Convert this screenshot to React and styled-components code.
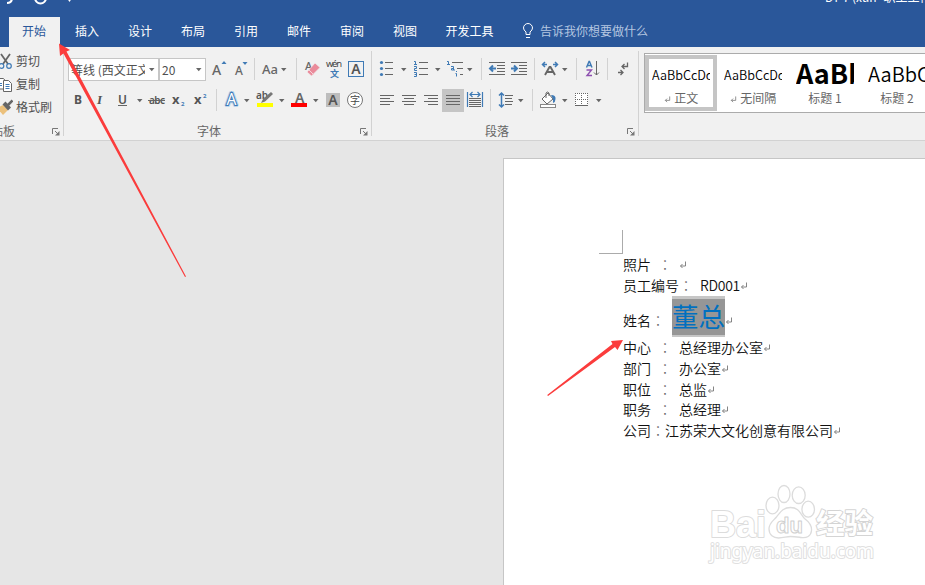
import React from 'react'
import styled, { createGlobalStyle, css } from 'styled-components'

const ui = '"Noto Sans CJK SC", "Noto Sans", sans-serif'
const grey = '#666'
const blue = '#3f7ab5'

const GlobalStyle = createGlobalStyle`
  * { box-sizing: border-box; }
  body { margin: 0; overflow: hidden; }
`

const Window = styled.div`
  position: relative;
  display: flex;
  flex-direction: column;
  width: 925px;
  height: 585px;
  overflow: hidden;
  background: #e6e6e6;
  color: #505050;
  font: 12px/16px ${ui};
`

const TitleBar = styled.div`
  display: flex;
  justify-content: space-between;
  height: 17px;
  flex: none;
  overflow: hidden;
  background: #2a579a;
  color: #fff;
`

const TitleText = styled.div`
  width: 100px;
  margin-top: -11px;
  white-space: nowrap;
`

const Tabs = styled.div`
  display: flex;
  flex: none;
  height: 30px;
  padding-left: 8px;
  background: #2a579a;
`

const Tab = styled.div`
  width: ${p => p.$wide ? 76 : 53}px;
  padding-right: 1px;
  color: #fff;
  line-height: 27px;
  text-align: center;
  ${p => p.$active && css`
    width: 51px;
    margin: 0 1px;
    background: #f1f1f1;
    color: #2a579a;
  `}
`

const TellMe = styled.div`
  display: flex;
  gap: 6px;
  padding-left: 14px;
  color: #b4c6e0;
  line-height: 28px;
`

const Ribbon = styled.div`
  display: flex;
  flex: none;
  height: 94px;
  padding-top: 4px;
  border-bottom: 1px solid #d2d2d2;
  background: #f1f1f1;
`

const Group = styled.div`
  display: flex;
  flex-direction: column;
  flex: none;
  width: ${p => p.$width}px;
  height: 85px;
  padding-top: ${p => p.$top || 0}px;
  border-right: 1px solid #d2d2d2;
`

const Row = styled.div`
  display: flex;
  height: 23px;
  margin-bottom: 8px;
`

const ClipList = styled.div`
  margin-top: -1px;
`

const Icon = styled.svg`
  display: block;
  flex: none;
  margin-left: ${p => p.$ml || 0}px;
  overflow: visible;
  background: ${p => p.$on ? '#c5c5c5' : 'transparent'};
  font-family: "Noto Sans", sans-serif;
`

const Separator = styled.div`
  flex: none;
  width: 1px;
  height: 22px;
  margin-left: ${p => p.$ml}px;
  background: #d2d2d2;
`

const Footer = styled.div`
  display: flex;
  justify-content: space-between;
  height: 16px;
  margin: auto 0 -3px;
  padding: 0 3px 0 ${p => p.$left}px;
  color: #666;
  white-space: nowrap;
`

const ClipItem = styled.div`
  display: flex;
  align-items: center;
  gap: 3px;
  height: 23px;
  line-height: 20px;
  white-space: nowrap;
`

const ClipLabel = styled.span`
  margin-top: -1px;
`

const Combo = styled.div`
  display: flex;
  flex: none;
  align-items: center;
  width: ${p => p.$width}px;
  height: 23px;
  margin-left: ${p => p.$ml || 0}px;
  padding: 0 3px 0 2px;
  border: 1px solid #c6c6c6;
  background: #fff;
`

const ComboText = styled.span`
  flex: 1;
  overflow: hidden;
  margin-right: 4px;
  white-space: nowrap;
`

const Gallery = styled.div`
  display: flex;
  flex: none;
  width: 290px;
  height: 60px;
  margin: 2px 0 0 5px;
  padding-top: 1px;
  border: 1px solid #ababab;
  background: #fff;
`

const StyleCard = styled.div`
  display: flex;
  flex-direction: column;
  flex: none;
  width: 72px;
  height: 56px;
  padding: 0 3px;
  border: 4px solid ${p => p.$active ? '#c5c5c5' : 'transparent'};
  text-align: center;
`

const Sample = styled.div`
  flex: none;
  height: 31px;
  overflow: hidden;
  color: #000;
  font-size: ${p => p.$size}px;
  font-weight: ${p => p.$bold ? 700 : 350};
  line-height: ${p => p.$line || 32}px;
  text-align: left;
  white-space: nowrap;
`

const StyleName = styled.div`
  color: #666;
  white-space: nowrap;

  svg {
    margin-right: 1px;
  }
`

const Canvas = styled.div`
  flex: 1;
  padding: 17px 0 0 503px;
`

const Page = styled.div`
  width: 422px;
  height: 427px;
  padding: 71px 0 0 95px;
  border: solid #c6c6c6;
  border-width: 1px 0 0 1px;
  background: #fff;
`

const MarginCorner = styled.div`
  width: 24px;
  height: 24px;
  border: solid #ababab;
  border-width: 0 1px 1px 0;
`

const Lines = styled.div`
  padding-left: 24px;
`

const Line = styled.div`
  display: flex;
  align-items: center;
  height: ${p => p.$tall ? 41 : 20.8}px;
  color: #111;
  font-size: 14px;
  font-weight: 350;
  line-height: 20px;
  white-space: pre;

  svg {
    margin-top: ${p => p.$tall ? 10 : 2}px;
  }
`

const Label = styled.span`
  padding-top: ${p => p.$tall ? 7 : 0}px;
`

const Colon = styled(Label)`
  width: 14px;
  margin: 0 ${p => p.$tight ? 0 : 7}px 0 ${p => p.$spaced ? 7 : 0}px;
  color: #666;
  font-family: "Noto Sans CJK TC", sans-serif;
  font-weight: 300;
`

const Value = styled.span`
  letter-spacing: ${p => p.$latin ? -0.3 : 0}px;
`

const Selected = styled.span`
  display: block;
  width: 53px;
  height: 41px;
  border: solid #c6c6c6;
  border-width: 3px 0 2px;
  background: #969696;
  color: #0070c0;
  font-size: 26.5px;
  font-weight: 400;
  line-height: 34px;
`

const Overlay = styled.svg`
  position: absolute;
  top: 0;
  left: 0;
  pointer-events: none;
`

const CaretIcon = styled(Icon)`
  margin-right: 1px;
`

const Caret = ({ ml }) => (
  <CaretIcon $ml={ml} width="5" height="23" fill={grey}>
    <path d="M0 10h5.500L2.750 13.200z" />
  </CaretIcon>
)

const Bars = ({ bars }) => bars.map(([x, y, w], i) => (
  <rect key={i} x={x} y={y} width={w} height="1" fill={grey} stroke="none" />
))

const LauncherIcon = styled.svg`
  width: 8px;
  height: 8px;
  margin-top: 5px;
`

const Launcher = () => (
  <LauncherIcon viewBox="0 0 8 8">
    <path d="M.5 6V.5H6M3 3l3 3" fill="none" stroke="#777" />
    <path d="M7.500 3v4.500H3z" fill="#777" />
  </LauncherIcon>
)

const ReturnMark = ({ size = 8 }) => (
  <svg width={size} height={size} viewBox="0 0 8 8" fill="none" stroke="#777" strokeWidth=".9">
    <path d="M6.500 .5v4.500H1.500M3.500 3l-2 2 2 2" />
  </svg>
)

const Clipboard = () => (
  <Group $width={64}>
    <ClipList>
      <ClipItem>
        <svg width="13" height="18" fill="none">
          <path d="M1 1l7 10M10 1L3 11" stroke="#666" strokeWidth="1.800" />
          <circle cx="1.500" cy="13" r="2.300" stroke={blue} strokeWidth="1.200" />
          <circle cx="9" cy="13" r="2.300" stroke={blue} strokeWidth="1.200" />
        </svg>
        <ClipLabel>剪切</ClipLabel>
      </ClipItem>
      <ClipItem>
        <svg width="13" height="16" fill="#fff" stroke="#666">
          <path d="M-4 1.500H3.500L5.500 4v8H-4" />
          <path d="M3.500 3.500h5l3 3v8h-8z" />
          <path d="M5.500 7.500h4M5.500 9.500h4M5.500 11.500h4M0 6.500h2M0 8.500h2" stroke={blue} />
        </svg>
        <ClipLabel>复制</ClipLabel>
      </ClipItem>
      <ClipItem>
        <svg width="13" height="18">
          <path d="M-3 9l6-3 5 5-5 5z" fill="#ecc17c" />
          <path d="M2.500 5.500l3-3 5.500 6-3 3z" fill="#666" />
          <path d="M8 6l4.500-4.500" stroke="#666" strokeWidth="2.500" />
        </svg>
        <ClipLabel>格式刷</ClipLabel>
      </ClipItem>
    </ClipList>
    <Footer $left={0}>
      <span style={{ marginLeft: -21 }}>剪贴板</span>
      <Launcher />
    </Footer>
  </Group>
)

const FontGroup = () => (
  <Group $width={308} $top={7}>
    <Row>
      <Combo $width={91} $ml={4}><ComboText>等线 (西文正文)</ComboText><Caret /></Combo>
      <Combo $width={47}><ComboText>20</ComboText><Caret /></Combo>
      <Icon $ml={5} width="16" height="23">
        <text x="1" y="17" fontSize="14" fontWeight="500" fill={grey}>A</text>
        <path d="M10.500 6h5L13 3z" fill={blue} />
      </Icon>
      <Icon $ml={7} width="14" height="23">
        <text x="1" y="17" fontSize="12" fontWeight="500" fill={grey}>A</text>
        <path d="M8.500 4h5L11 7z" fill={blue} />
      </Icon>
      <Separator $ml={6} />
      <Icon $ml={6} width="18" height="23">
        <text x="1" y="15.500" fontSize="13" fontWeight="500" fill={grey}>Aa</text>
      </Icon>
      <Caret ml={2} />
      <Separator $ml={9} />
      <Icon $ml={8} width="16" height="23">
        <text x="0" y="12" fontSize="11" fontWeight="500" fill={grey}>A</text>
        <path d="M2 14l8-9L15 9.500 6.500 18z" fill="#ea8b9b" stroke="#f1f1f1" strokeWidth=".7" />
        <path d="M4 12l4.500 4.500" stroke="#f7d3d9" />
      </Icon>
      <Icon $ml={5} width="17" height="23">
        <text x="0" y="8.500" fontSize="9.500" textLength="16" fill="#444">wén</text>
        <text x="4" y="18.500" fontSize="9" fontWeight="700" fill={blue} fontFamily="Noto Sans CJK SC">文</text>
      </Icon>
      <Icon $ml={5} width="16" height="23">
        <rect x=".5" y="3.500" width="15" height="15" fill="none" stroke={blue} />
        <text x="3.300" y="16" fontSize="14" fontWeight="600" fill="#555">A</text>
      </Icon>
    </Row>
    <Row>
      <Icon $ml={10} width="10" height="23">
        <text x="0" y="15" fontSize="12" fontWeight="700" fill="#555">B</text>
      </Icon>
      <Icon $ml={11} width="10" height="23">
        <text x="2" y="15" fontSize="13" fontStyle="italic" fill="#555" fontFamily="Liberation Serif" fontWeight="700">I</text>
      </Icon>
      <Icon $ml={12} width="11" height="23">
        <text x="1" y="14.500" fontSize="12" fontWeight="600" fill="#555">U</text>
        <Bars bars={[[1, 16, 9]]} />
      </Icon>
      <Caret ml={9} />
      <Icon $ml={5} width="18" height="23">
        <text x="1" y="15" fontSize="10" fontWeight="600" textLength="16" fill="#555">abc</text>
        <Bars bars={[[0, 11, 17]]} />
      </Icon>
      <Icon $ml={6} width="14" height="23">
        <text x="0" y="15" fontSize="13" fontWeight="700" fill="#555">x</text>
        <text x="9" y="16.500" fontSize="6" fontWeight="700" fill={blue}>2</text>
      </Icon>
      <Icon $ml={8} width="14" height="23">
        <text x="0" y="15" fontSize="13" fontWeight="700" fill="#555">x</text>
        <text x="9" y="9" fontSize="6" fontWeight="700" fill={blue}>2</text>
      </Icon>
      <Separator $ml={8} />
      <Icon $ml={7} width="16" height="23">
        <text x="2.500" y="16" fontSize="15.500" fill="#fff" stroke="#b9d3ec" strokeWidth="4" strokeLinejoin="round">A</text>
        <text x="2.500" y="16" fontSize="15.500" fill="#fff" stroke={blue} strokeWidth="2" paintOrder="stroke">A</text>
      </Icon>
      <Caret ml={4} />
      <Icon $ml={6} width="18" height="23">
        <text x="0" y="9.500" fontSize="10" fontWeight="600" fill="#555">ab</text>
        <path d="M5 14l2-4 8-7 2 2-8 7.500z" fill="#777" />
        <rect x="1" y="14" width="16" height="4" fill="#ff0" />
      </Icon>
      <Caret ml={5} />
      <Icon $ml={5} width="18" height="23">
        <text x="5" y="13.500" fontSize="14" fontWeight="600" fill={grey}>A</text>
        <rect x="1" y="14" width="16" height="4" fill="#f00" />
      </Icon>
      <Caret ml={5} />
      <Icon $ml={7} width="14" height="23">
        <rect y="4" width="14" height="14" fill="#bdbdbd" />
        <text x="2.300" y="15.500" fontSize="14" fontWeight="600" fill="#555">A</text>
      </Icon>
      <Icon $ml={6} width="18" height="23">
        <circle cx="9" cy="11" r="7.500" fill="#fff" stroke="#777" />
        <text x="4" y="14.700" fontSize="10" fill="#444" fontFamily="Noto Sans CJK SC">字</text>
      </Icon>
    </Row>
    <Footer $left={133}>字体<Launcher /></Footer>
  </Group>
)

const ParagraphGroup = () => (
  <Group $width={267} $top={7}>
    <Row>
      <Icon $ml={8} width="14" height="23">
        {[4, 10, 16].map(y => <circle key={y} cx="1.500" cy={y + .5} r="1.600" fill={blue} />)}
        <Bars bars={[[5, 4, 8], [5, 10, 8], [5, 16, 8]]} />
      </Icon>
      <Caret ml={7} />
      <Icon $ml={6} width="16" height="23" fill="none" stroke={blue}>
        <path d="M1 3.500h1.500v3M1 6.500h3M1 8.500h2.500v2h-2v2H4M1 14.500h2.500v4H1M1.500 16.500h2" />
        <Bars bars={[[6, 4, 9], [6, 10, 9], [6, 16, 9]]} />
      </Icon>
      <Caret ml={6} />
      <Icon $ml={6} width="16" height="23">
        <path d="M0 3.500h1.500v3M0 6.500h3M4 8.500h2.500v3.500M6 10.500H4.500v1.500H8M8.500 15.500h1v3M9.500 13v1" fill="none" stroke={blue} />
        <Bars bars={[[5, 4, 11], [10, 10, 6], [13, 16, 3]]} />
      </Icon>
      <Caret ml={4} />
      <Separator $ml={8} />
      <Icon $ml={6} width="18" height="23">
        <Bars bars={[[1, 4, 16], [9, 7, 8], [9, 10, 8], [9, 13, 8], [1, 16, 16]]} />
        <path d="M8 10.500H3M5 7.500l-3 3 3 3" fill="none" stroke={blue} strokeWidth="2" />
      </Icon>
      <Icon $ml={4} width="18" height="23">
        <Bars bars={[[1, 4, 16], [9, 7, 8], [9, 10, 8], [9, 13, 8], [1, 16, 16]]} />
        <path d="M1 10.500h5M4 7.500l3 3-3 3" fill="none" stroke={blue} strokeWidth="2" />
      </Icon>
      <Separator $ml={6} />
      <Icon $ml={6} width="18" height="23">
        <path d="M4 17l4.500-8h1L14 17M6 14h6.500" fill="none" stroke={grey} strokeWidth="1.900" />
        <path d="M6 6.500H2M4 4L1.500 6.500 4 9M12 6.500h4M14 4l2.500 2.500L14 9" fill="none" stroke={blue} strokeWidth="1.500" />
      </Icon>
      <Caret ml={3} />
      <Separator $ml={8} />
      <Icon $ml={8} width="15" height="23" fill="none" strokeWidth="1.400">
        <path d="M1.500 9.500L4 3.500h.5L7 9.500M2.500 7.500H6" stroke={blue} />
        <path d="M1.500 12h5L2 17.500h5" stroke="#8e50b0" />
        <path d="M11.500 3v14M9 14.500l2.500 2.500 2.500-2.500" stroke={grey} strokeWidth="1" />
      </Icon>
      <Separator $ml={7} />
      <Icon $ml={9} width="12" height="23" fill="none" stroke={grey} strokeWidth="1.300">
        <path d="M10.500 4.500v4H5M7.500 6L5 8.500 7.500 11M1 14.500h5M3.500 12L6 14.500 3.500 17" />
      </Icon>
    </Row>
    <Row>
      <Icon $ml={8} width="14" height="23"><Bars bars={[[0, 6, 14], [0, 9, 10], [0, 12, 14], [0, 15, 10]]} /></Icon>
      <Icon $ml={8} width="14" height="23"><Bars bars={[[0, 6, 14], [2, 9, 10], [0, 12, 14], [2, 15, 10]]} /></Icon>
      <Icon $ml={8} width="14" height="23"><Bars bars={[[0, 6, 14], [4, 9, 10], [0, 12, 14], [4, 15, 10]]} /></Icon>
      <Icon $ml={4} $on width="22" height="23"><Bars bars={[[4, 6, 14], [4, 9, 14], [4, 12, 14], [4, 15, 14]]} /></Icon>
      <Icon $ml={3} width="16" height="23">
        <path d="M.5 3v15M15.500 3v15M3 5.500h10M5.500 3L3 5.500 5.500 8M10.500 3L13 5.500 10.500 8" fill="none" stroke={blue} strokeWidth="1.200" />
        <Bars bars={[[2, 9, 12], [2, 11, 12], [2, 13, 12], [2, 15, 12], [2, 17, 12]]} />
      </Icon>
      <Separator $ml={7} />
      <Icon $ml={7} width="16" height="23">
        <path d="M3.500 4v14M1 6.500L3.500 4 6 6.500M1 15.500L3.500 18 6 15.500" fill="none" stroke={blue} strokeWidth="1.500" />
        <Bars bars={[[7, 6, 8], [7, 9, 7], [7, 12, 8], [7, 15, 7]]} />
      </Icon>
      <Caret ml={4} />
      <Separator $ml={8} />
      <Icon $ml={7} width="17" height="23">
        <path d="M2 10l6-6 5 6-6 5z" fill="#fff" stroke={grey} />
        <path d="M6 9V4q1.500-2 3 0v3" fill="none" stroke={grey} />
        <path d="M11 6q5 0 4.500 4 0 3-2.500 4 .5-3-.5-5z" fill={blue} />
        <rect x=".5" y="15.500" width="15" height="3" fill="#fff" stroke="#888" />
      </Icon>
      <Caret ml={5} />
      <Icon $ml={7} width="13" height="23">
        <rect y="4" width="13" height="13" fill="#fff" />
        <path d="M0 4.500h13M0 10.500h13M.5 4v13M6.500 4v13M12.500 4v13" stroke={grey} strokeDasharray="1 1" />
        <Bars bars={[[0, 16, 13]]} />
      </Icon>
      <Caret ml={8} />
    </Row>
    <Footer $left={113}>段落<Launcher /></Footer>
  </Group>
)

const StyleGallery = () => (
  <Gallery>
    <StyleCard $active>
      <Sample $size={12.6}>AaBbCcDd</Sample>
      <StyleName><ReturnMark size={7} /> 正文</StyleName>
    </StyleCard>
    <StyleCard>
      <Sample $size={12.6}>AaBbCcDd</Sample>
      <StyleName><ReturnMark size={7} /> 无间隔</StyleName>
    </StyleCard>
    <StyleCard>
      <Sample $size={27} $bold $line={27}>AaBb</Sample>
      <StyleName>标题 1</StyleName>
    </StyleCard>
    <StyleCard>
      <Sample $size={20} $line={30}>AaBbCc</Sample>
      <StyleName>标题 2</StyleName>
    </StyleCard>
  </Gallery>
)

const fields = [
  { label: '照片', spaced: true },
  { label: '员工编号', value: 'RD001', latin: true },
  { label: '姓名', value: '董总', selected: true },
  { label: '中心', spaced: true, value: '总经理办公室' },
  { label: '部门', spaced: true, value: '办公室' },
  { label: '职位', spaced: true, value: '总监' },
  { label: '职务', spaced: true, value: '总经理' },
  { label: '公司', tight: true, value: '江苏荣大文化创意有限公司' }
]

const Field = ({ label, value, spaced, tight, latin, selected }) => (
  <Line $tall={selected}>
    <Label $tall={selected}>{label}</Label>
    <Colon $tall={selected} $spaced={spaced} $tight={tight}>：</Colon>
    {selected ? <Selected>{value}</Selected> : <Value $latin={latin}>{value}</Value>}
    <ReturnMark />
  </Line>
)

const Watermark = () => (
  <g fill="#fff" stroke="#dcdcdc" strokeWidth="1.300" strokeLinejoin="round">
    <ellipse cx="772.500" cy="505.500" rx="6.500" ry="8.300" />
    <ellipse cx="784" cy="494" rx="6" ry="8.500" />
    <ellipse cx="798.700" cy="495.200" rx="6.500" ry="8.300" />
    <ellipse cx="808.200" cy="509.200" rx="6.300" ry="8" />
    <path d="M790.500 507.500c9 0 10 7 14 11 4 3 7.500 7 7 12-.5 6-5 7.500-10 7-4-.5-7-1-11-1s-7 1.500-12 1.500-9.500-3-9.500-9c0-6 4-8 7.500-12s6-9.500 14-9.500z" />
    <g fontFamily="Liberation Sans" fontWeight="700">
      <text x="710" y="536.500" fontSize="37" textLength="56" lengthAdjust="spacingAndGlyphs" strokeWidth="2" paintOrder="stroke">Bai</text>
      <text x="776" y="533" fontSize="22" textLength="27" strokeWidth="1" stroke="#d0d0d0">du</text>
    </g>
    <text x="816" y="533.500" fontSize="28.500" fontWeight="700" fontFamily="Noto Sans CJK SC" stroke="#d4d4d4" strokeWidth="2" paintOrder="stroke">经验</text>
    <text x="710" y="558" fontSize="19" textLength="164" lengthAdjust="spacingAndGlyphs" fontFamily="Noto Sans" strokeWidth="2" stroke="#e0e0e0" paintOrder="stroke">jingyan.baidu.com</text>
  </g>
)

export default function App() {
  return (
    <>
      <GlobalStyle />
      <Window>
        <TitleBar>
          <svg width="80" height="17" fill="none" stroke="#fff" strokeWidth="2">
            <path d="M7 3q5 0 5-5" />
            <circle cx="40.500" cy="-2" r="5.500" />
            <path d="M67.500 -1h4L69.500 2z" fill="#fff" stroke="none" />
          </svg>
          <TitleText>DY-7 (xun- 职工工作证</TitleText>
        </TitleBar>
        <Tabs>
          <Tab $active>开始</Tab>
          {['插入', '设计', '布局', '引用', '邮件', '审阅', '视图'].map(name => <Tab key={name}>{name}</Tab>)}
          <Tab $wide>开发工具</Tab>
          <TellMe>
            <svg width="12" height="30" fill="none" stroke="#fff">
              <path d="M4 17.500v-2.500Q1.500 13 1.500 11a4.500 4.500 0 0 1 9 0q0 2-2.500 4v2.500zM4 20.500h4" />
            </svg>
            告诉我你想要做什么
          </TellMe>
        </Tabs>
        <Ribbon>
          <Clipboard />
          <FontGroup />
          <ParagraphGroup />
          <StyleGallery />
        </Ribbon>
        <Canvas>
          <Page>
            <MarginCorner />
            <Lines>
              {fields.map(f => <Field key={f.label} {...f} />)}
            </Lines>
          </Page>
        </Canvas>
        <Overlay width="925" height="585">
          <Watermark />
          <g fill="#fb3c3c">
            <path d="M59 43.500l11 6.500-3.500 1.500L186 276.500l-1 .5L63.500 53.500 60 56z" />
            <path d="M623 340l-5.500 10-2.500-3L548 396l-.8-1L612.500 344l-1.500-3z" />
          </g>
        </Overlay>
      </Window>
    </>
  )
}
